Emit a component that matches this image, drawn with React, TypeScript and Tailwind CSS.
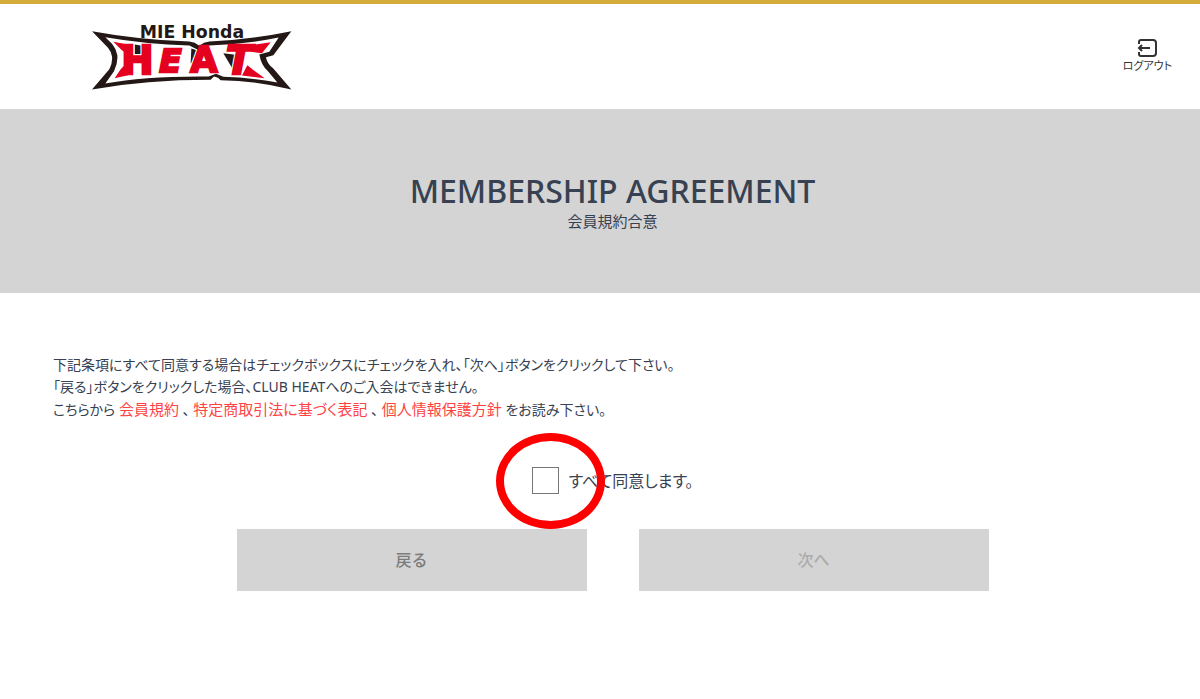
import { useState } from "react";

const JP_FONT = "font-['Noto_Sans','Noto_Sans_CJK_JP',sans-serif]";

function HeatLetters() {
  return (
    <>
      <text x="126" y="223" fontSize="116">H</text>
      <text x="240" y="218" fontSize="98" fontStyle="italic">E</text>
      <text x="333" y="218" fontSize="106">A</text>
      <text x="440" y="223" fontSize="116" fontStyle="italic">T</text>
    </>
  );
}

function HeatLogo() {
  return (
    <svg
      viewBox="38 70 600 200"
      className="h-[67px] w-[200px]"
      role="img"
      aria-label="MIE Honda HEAT"
    >
      <text
        x="338"
        y="114"
        textAnchor="middle"
        fontSize="52"
        fill="#231815"
        className="font-['DejaVu_Sans',sans-serif] font-bold"
      >
        MIE Honda
      </text>
      {/* Shadows between the letters */}
      <path
        d="M166 134 L188 138 L186 166 L166 166 Z M336 146 L366 156 L352 190 L334 190 Z M432 160 L480 166 L476 214 L464 214 Z"
        fill="#231815"
      />
      <g
        fill="#fff"
        stroke="#fff"
        strokeWidth="14"
        className="font-['DejaVu_Sans',sans-serif] font-bold"
      >
        <HeatLetters />
      </g>
      {/* Winged frame */}
      <path
        fillRule="evenodd"
        d="M38 94 Q180 120 330 125 L346 129 L360 138 L374 129 L390 125 Q510 120 636 94 L582 166 L560 172 Q562 190 582 206 L636 269 Q530 242 424 241 L416 234 L404 230 L394 240 Q200 240 38 269 L90 208 Q100 190 98 170 Q96 156 86 144 Z
           M78 112 Q200 133 330 137 L360 152 L390 137 Q500 133 598 113 L570 156 L540 164 Q546 198 566 214 L594 248 Q510 232 432 231 L410 222 L388 230 Q200 228 78 251 L104 214 Q116 190 114 166 Q110 146 98 132 Z"
        fill="#231815"
      />
      {/* Flared corners */}
      <path
        d="M102 126 L150 135 L140 160 L126 150 Z M124 208 L140 192 L146 226 L106 235 Z M520 135 L574 127 L548 160 L516 156 Z M504 196 L524 212 L556 235 L488 227 Z"
        fill="#e60020"
      />
      <g
        fill="#e60020"
        stroke="#e60020"
        strokeWidth="7"
        className="font-['DejaVu_Sans',sans-serif] font-bold"
      >
        <HeatLetters />
      </g>
    </svg>
  );
}

function LogoutIcon() {
  return (
    <svg viewBox="0 0 20 20" className="size-5" fill="none" stroke="#333" strokeWidth="2" aria-hidden="true">
      <path d="M2 6 V4 Q2 2 4 2 H16 Q19 2 19 5 V15 Q19 18 16 18 H4 Q2 18 2 16 V14" />
      <path d="M13 10 H2 M5 7 L2 10 L5 13" />
    </svg>
  );
}

function Header() {
  return (
    <header className="flex h-[109px] items-center justify-between border-t-4 border-[#d4ac3c] bg-white pr-7 pl-[92px]">
      <HeatLogo />
      <button type="button" className="flex flex-col items-center pb-0.5 text-[11px] leading-4 text-[#333] [font-feature-settings:'palt']">
        <LogoutIcon />
        ログアウト
      </button>
    </header>
  );
}

function Terms() {
  return (
    <p className="text-sm leading-[22px] [font-feature-settings:'palt']">
      下記条項にすべて同意する場合はチェックボックスにチェックを入れ、「次へ」ボタンをクリックして下さい。
      <br />
      「戻る」ボタンをクリックした場合、CLUB HEATへのご入会はできません。
      <br />
      こちらから{" "}
      <a href="#terms" className="text-[15px] text-[#ff4343]">会員規約</a> 、{" "}
      <a href="#law" className="text-[15px] text-[#ff4343]">特定商取引法に基づく表記</a> 、{" "}
      <a href="#privacy" className="text-[15px] text-[#ff4343]">個人情報保護方針</a> をお読み下さい。
    </p>
  );
}

export default function App() {
  const [agreed, setAgreed] = useState(false);

  return (
    <div className={`min-h-screen bg-white text-[#374151] ${JP_FONT}`}>
      <Header />

      <section className="flex h-[184px] flex-col items-center justify-center bg-[#d4d4d4] pr-7 pl-[53px]">
        <h1 className="text-[32px] leading-10 font-medium">MEMBERSHIP AGREEMENT</h1>
        <p className="text-[15px] leading-5">会員規約合意</p>
      </section>

      <main className="pt-[61px] pr-7 pl-[53px]">
        <Terms />

        <div className="mt-[46px] flex justify-center">
          <div className="relative flex items-center gap-2.5">
            <input
              id="agree"
              type="checkbox"
              checked={agreed}
              onChange={(e) => setAgreed(e.target.checked)}
              className="size-[27px] appearance-none border border-[#767676] bg-white checked:bg-[#374151]"
            />
            <label htmlFor="agree" className="text-base leading-6 [font-feature-settings:'palt']">
              すべて同意します。
            </label>
            {/* Highlight ring around the tick box */}
            <span className="pointer-events-none absolute top-1/2 -left-9 h-24 w-[109px] -translate-y-1/2 rounded-[50%] border-8 border-[#ff0000]" />
          </div>
        </div>

        <div className="mx-auto mt-[35px] grid max-w-[752px] grid-cols-2 gap-[52px] text-base font-medium">
          <button type="button" className="h-[62px] bg-[#d4d4d4] text-[#7c7c7c]">戻る</button>
          <button type="button" disabled={!agreed} className="h-[62px] bg-[#d4d4d4] text-[#7c7c7c] disabled:text-[#acacac]">
            次へ
          </button>
        </div>
      </main>
    </div>
  );
}
